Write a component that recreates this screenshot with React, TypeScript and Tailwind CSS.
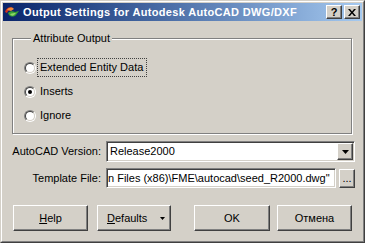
import React from "react";

const raised =
  "border border-t-white border-l-white border-r-[#404040] border-b-[#404040] shadow-[inset_-1px_-1px_0_#808080] bg-[#D4D0C8]";
const sunken =
  "border border-t-[#808080] border-l-[#808080] border-r-white border-b-white shadow-[inset_1px_1px_0_#404040,inset_-1px_-1px_0_#D4D0C8] bg-white";

function FmeIcon() {
  return (
    <svg width="16" height="16" viewBox="0 0 16 16">
      <path d="M1 8 C2 4 6 2 9 4 L8 6 C6 5 4 6 3 9 Z" fill="#d8301c" />
      <path d="M3 6 C5 3 8 3 10 5 L7 7 Z" fill="#f08a3a" />
      <path d="M4 9 C6 7 9 7 11 8 L15 7 L12 11 C10 13 7 13 5 11 Z" fill="#3aa336" />
      <path d="M6 10 C8 9 10 9 12 9 L10 11 C9 12 7 12 6 10 Z" fill="#8fd66a" />
    </svg>
  );
}

function Radio({ label, checked, focused }: { label: string; checked?: boolean; focused?: boolean }) {
  return (
    <div className="flex items-center h-[19px]">
      <div className="w-[12px] h-[12px] rounded-full border border-t-[#808080] border-l-[#808080] border-r-white border-b-white">
        <div className="w-full h-full rounded-full border border-t-[#404040] border-l-[#404040] border-r-[#D4D0C8] border-b-[#D4D0C8] bg-white flex items-center justify-center">
          {checked && <div className="w-[4px] h-[4px] rounded-full bg-black" />}
        </div>
      </div>
      <div
        className={`ml-[1px] h-[19px] flex items-center pl-[2px] pr-[3px] ${
          focused ? "border border-dotted border-[#404040]" : "border border-transparent"
        }`}
      >
        {label}
      </div>
    </div>
  );
}

export default function App() {
  return (
    <div
      className="w-[365px] h-[243px] border border-t-[#D4D0C8] border-l-[#D4D0C8] border-r-[#404040] border-b-[#404040] bg-[#D4D0C8] text-[11px] text-black"
      style={{ fontFamily: '"Liberation Sans", Arial, sans-serif' }}
    >
      <div className="w-full h-full border border-t-white border-l-white border-r-[#808080] border-b-[#808080] p-px flex flex-col">
        {/* title bar */}
        <div className="h-[18px] flex items-center bg-linear-to-r from-[#0A246A] to-[#A6CAF0] pl-[1px] pr-[2px]">
          <FmeIcon />
          <div className="ml-[3px] flex-1 text-white font-bold tracking-[0.33px] leading-none">
            Output Settings for Autodesk AutoCAD DWG/DXF
          </div>
          <div className={`${raised} w-[16px] h-[14px] flex items-center justify-center font-bold text-[11px] leading-none`}>
            ?
          </div>
          <div className={`${raised} ml-[2px] w-[16px] h-[14px] flex items-center justify-center`}>
            <svg width="8" height="7" viewBox="0 0 8 7">
              <path d="M0 0h2l2 2.5L6 0h2L5 3.5 8 7H6L4 4.5 2 7H0l3-3.5z" fill="#000" />
            </svg>
          </div>
        </div>

        {/* group box */}
        <fieldset className="ml-[9px] mt-[11px] w-[340px] h-[102px] border border-[#808080] shadow-[inset_1px_1px_0_#fff,1px_1px_0_#fff] pl-[11px] pt-[13px]">
          <legend className="ml-[7px] px-[2px] bg-[#D4D0C8] leading-[13px]">Attribute Output</legend>
          <div className="flex flex-col gap-[5px]">
            <Radio label="Extended Entity Data" focused />
            <Radio label="Inserts" checked />
            <Radio label="Ignore" />
          </div>
        </fieldset>

        {/* AutoCAD version */}
        <div className="flex items-center mt-[7px] h-[21px]">
          <div className="w-[94px] text-right pr-[2px] ml-[6px] whitespace-nowrap">AutoCAD Version:</div>
          <div className={`${sunken} ml-[3px] w-[249px] h-[21px] flex items-center`}>
            <div className="flex-1 pl-[3px]">Release2000</div>
            <div className={`${raised} w-[16px] h-[17px] mr-[1px] flex items-center justify-center`}>
              <svg width="7" height="4" viewBox="0 0 7 4">
                <path d="M0 0h7L3.5 4z" fill="#000" />
              </svg>
            </div>
          </div>
        </div>

        {/* template file */}
        <div className="flex items-center mt-[6px] h-[20px]">
          <div className="w-[94px] text-right pr-[2px] ml-[6px] whitespace-nowrap">Template File:</div>
          <div className={`${sunken} ml-[3px] w-[230px] h-[20px] flex items-center overflow-hidden whitespace-nowrap pl-[1px]`}>
            n Files (x86)\FME\autocad\seed_R2000.dwg"
          </div>
          <div className={`${raised} ml-[3px] w-[16px] h-[19px] flex items-end justify-center pb-[3px] leading-none`}>
            ...
          </div>
        </div>

        {/* buttons */}
        <div className="flex mt-[17px] ml-[10px]">
          <div className={`${raised} w-[75px] h-[26px] flex items-center justify-center`}>
            <span>
              <span className="underline">H</span>elp
            </span>
          </div>
          <div className={`${raised} ml-[9px] w-[74px] h-[26px] flex items-center`}>
            <span className="ml-[9px]">
              <span className="underline">D</span>efaults
            </span>
            <svg className="ml-[13px]" width="5" height="3" viewBox="0 0 5 3">
              <path d="M0 0h5L2.5 3z" fill="#000" />
            </svg>
          </div>
          <div className={`${raised} ml-[23px] w-[76px] h-[26px] flex items-center justify-center`}>OK</div>
          <div className={`${raised} ml-[7px] w-[75px] h-[26px] flex items-center justify-center`}>Отмена</div>
        </div>
      </div>
    </div>
  );
}
